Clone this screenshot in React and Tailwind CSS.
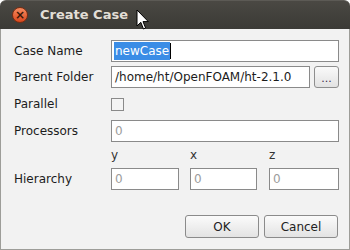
export default function App() {
  return (
    <div className="relative h-[250px] w-[350px] overflow-hidden bg-white font-['DejaVu_Sans',sans-serif] text-[12px] text-[#1c1c1c]">
      <TitleBar />
      <div className="flex h-[221px] flex-col border-x border-b border-[#9d9d99] bg-[#f2f2f2] pl-[12px] pt-[11px]">
        <Row label="Case Name">
          <div className="flex h-[22px] w-[228px] items-center border border-[#8a8a8a] bg-white pl-[2px]">
            <span className="flex h-[18px] items-center bg-[#3b8de6] px-[1px] text-white">newCase</span>
            <span className="h-[16px] w-px bg-black" />
          </div>
        </Row>
        <Row label="Parent Folder" className="mt-[4px]">
          <div className="flex h-[22px] w-[199px] items-center border border-[#8a8a8a] bg-white pl-[3px]">/home/ht/OpenFOAM/ht-2.1.0</div>
          <button className="ml-[4px] flex h-[22px] w-[25px] items-end justify-center rounded-[3px] border border-[#8e8e8e] bg-gradient-to-b from-[#fafafa] to-[#e2e2e2] pb-[3px] text-[11px] leading-none text-[#3a2a4a]">
            ...
          </button>
        </Row>
        <Row label="Parallel" className="mt-[5px]">
          <div className="h-[13px] w-[13px] border border-[#8a8a8a] bg-[#f4f4f4]" />
        </Row>
        <Row label="Processors" className="mt-[5px]">
          <Field className="w-[228px]" />
        </Row>
        <div className="mt-[6px] flex h-[13px] items-center pl-[98px] leading-none text-[#333]">
          <span className="w-[79px]">y</span>
          <span className="w-[79px]">x</span>
          <span>z</span>
        </div>
        <Row label="Hierarchy" className="mt-[7px]">
          <Field className="w-[68px]" />
          <Field className="ml-[11px] w-[67px]" />
          <Field className="ml-[12px] w-[70px]" />
        </Row>
        <div className="mt-[25px] flex pl-[172px]">
          <DialogButton>OK</DialogButton>
          <DialogButton className="ml-[5px]">Cancel</DialogButton>
        </div>
      </div>
      <Cursor />
    </div>
  );
}

function TitleBar() {
  return (
    <div className="flex h-[29px] items-center rounded-t-[6px] border-t border-[#5c5a55] bg-gradient-to-b from-[#4a4843] to-[#3b3a36] pl-[12px]">
      <div className="flex h-[16px] w-[16px] items-center justify-center rounded-full border border-[#7a2d12] bg-gradient-to-b from-[#f58a5e] to-[#d8461b] text-[12px] font-bold leading-none text-[#3a1808]">
        ×
      </div>
      <span className="ml-[12px] text-[13px] font-bold text-[#e2ded6]">Create Case</span>
    </div>
  );
}

function Row({ label, className = "", children }) {
  return (
    <div className={`flex h-[22px] items-center ${className}`}>
      <span className="w-[98px] shrink-0 pl-px">{label}</span>
      {children}
    </div>
  );
}

function Field({ className = "" }) {
  return (
    <div className={`flex h-[22px] items-center border border-[#8a8a8a] bg-white pl-[3px] text-[#9c9c9c] ${className}`}>0</div>
  );
}

function DialogButton({ className = "", children }) {
  return (
    <button
      className={`flex h-[23px] w-[74px] items-center justify-center rounded-[3px] border border-[#8b8b8b] bg-gradient-to-b from-[#fbfbfb] to-[#e3e3e3] text-[12px] text-[#222] ${className}`}
    >
      {children}
    </button>
  );
}

function Cursor() {
  return (
    <svg className="absolute left-[136px] top-[9px]" width="14" height="22" viewBox="0 0 14 22">
      <path d="M1 1 L1 17 L4.8 13.3 L7.5 20 L9.6 19 L7 12.6 L12.3 12.6 Z" fill="#fff" stroke="#000" strokeWidth="1" strokeLinejoin="round" />
    </svg>
  );
}
